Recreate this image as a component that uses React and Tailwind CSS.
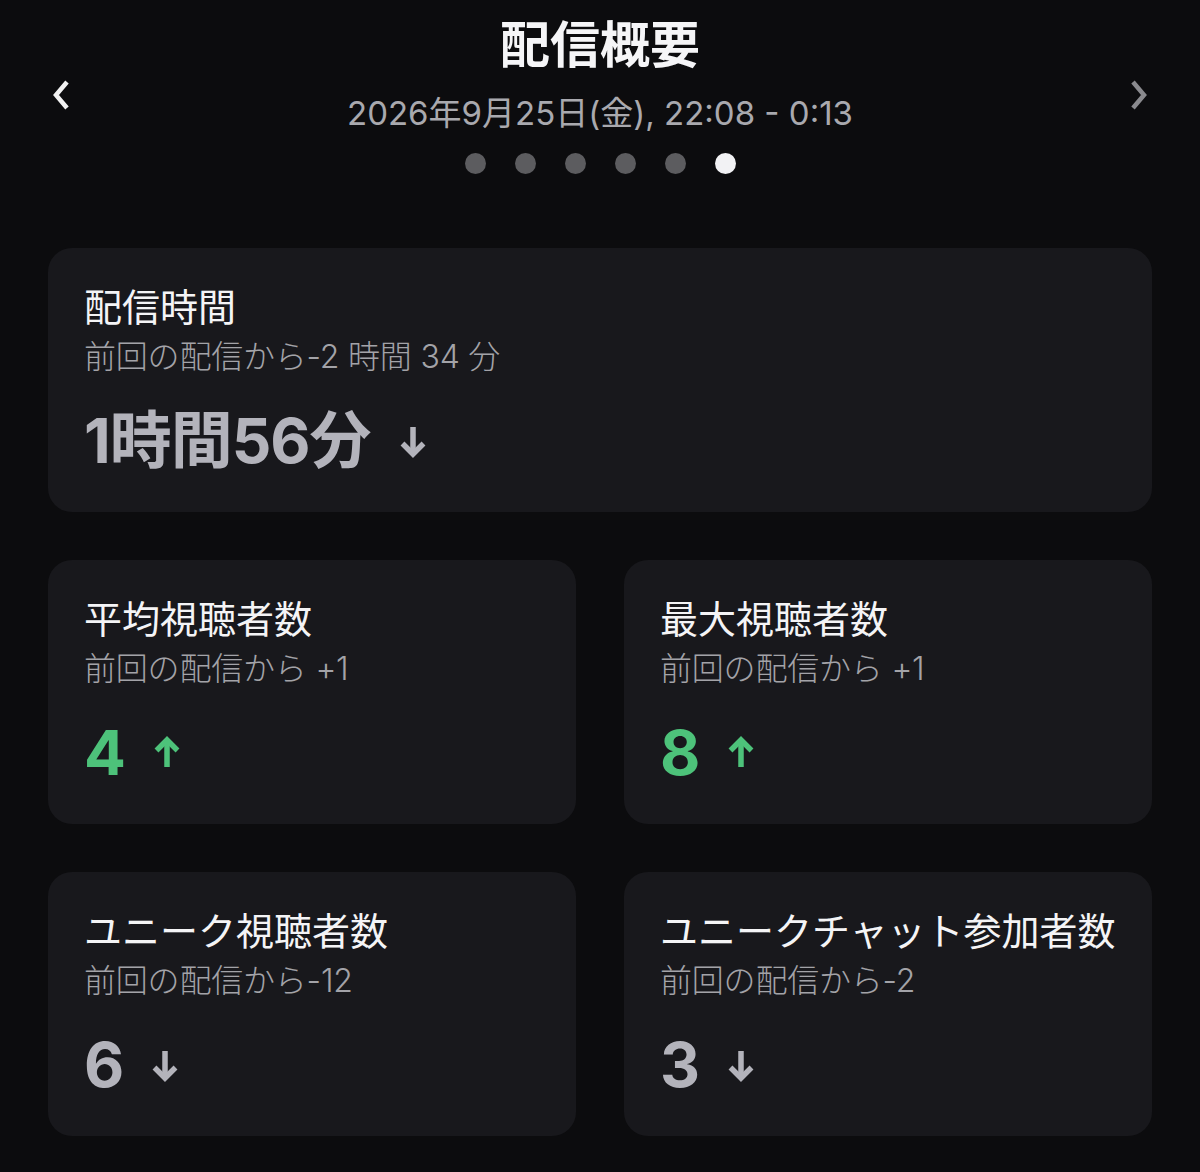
import React from 'react';

const FONT = "font-['Inter','Noto_Sans_CJK_JP',sans-serif]";

const ArrowIcon = ({ up, className }) => (
  <svg width="28" height="34" viewBox="0 0 28 34" fill="none" className={className}>
    {up ? (
      <>
        <path d="M14 31V4" stroke="currentColor" strokeWidth="5.5" />
        <path d="M3.5 14.5L14 4L24.5 14.5" stroke="currentColor" strokeWidth="5.5" strokeLinejoin="miter" />
      </>
    ) : (
      <>
        <path d="M14 3V30" stroke="currentColor" strokeWidth="5.5" />
        <path d="M3.5 19.5L14 30L24.5 19.5" stroke="currentColor" strokeWidth="5.5" strokeLinejoin="miter" />
      </>
    )}
  </svg>
);

const Chevron = ({ right, className }) => (
  <svg width="24" height="32" viewBox="0 0 24 32" fill="none" className={className}>
    {right ? (
      <path d="M7 3L18 16L7 29" stroke="currentColor" strokeWidth="4.5" />
    ) : (
      <path d="M17 3L6 16L17 29" stroke="currentColor" strokeWidth="4.5" />
    )}
  </svg>
);

const StatCard = ({ title, diff, value, up, className = '' }) => (
  <div className={`bg-[#18181c] rounded-[24px] px-[36px] pt-[37px] pb-[35px] ${className}`}>
    <h2 className="text-[38px] leading-[44px] font-normal text-[#f4f4f6]">{title}</h2>
    <p className="mt-2 text-[32px] leading-[40px] font-light text-[#a3a3a8] tracking-[-0.2px]">{diff}</p>
    <div className={`mt-7 flex items-center gap-[28px] h-[72px] ${up ? 'text-[#4dc27a]' : 'text-[#b3b3bb]'}`}>
      <span className="text-[62px] leading-[72px] font-bold tracking-[-1px]">{value}</span>
      <ArrowIcon up={up} />
    </div>
  </div>
);

export default function App() {
  return (
    <div className={`min-h-[1172px] bg-[#0c0c0e] px-12 pt-[15px] pb-[35px] ${FONT}`}>
      {/* Header */}
      <div className="grid grid-cols-[40px_1fr_40px] items-center">
        <Chevron className="text-[#f2f2f2] ml-[2px]" />
        <div className="flex flex-col items-center">
          <h1 className="text-[50px] leading-[60px] font-bold text-[#f5f5f7]">配信概要</h1>
          <p className="mt-[18px] text-[33px] leading-[40px] text-[#a9a9ae]">2026年9月25日(金), 22:08 - 0:13</p>
          <div className="mt-[20px] flex items-center gap-[29px]">
            {[0, 1, 2, 3, 4].map((i) => (
              <span key={i} className="w-[21px] h-[21px] rounded-full bg-[#5c5c5f]" />
            ))}
            <span className="w-[21px] h-[21px] rounded-full bg-[#f2f2f4]" />
          </div>
        </div>
        <Chevron right className="text-[#8a8a8e] justify-self-end mr-[2px]" />
      </div>

      {/* Stats */}
      <div className="mt-[74px] grid grid-cols-2 gap-12">
        <StatCard
          className="col-span-2"
          title="配信時間"
          diff="前回の配信から-2 時間 34 分"
          value="1時間56分"
          up={false}
        />
        <StatCard title="平均視聴者数" diff="前回の配信から +1" value="4" up />
        <StatCard title="最大視聴者数" diff="前回の配信から +1" value="8" up />
        <StatCard title="ユニーク視聴者数" diff="前回の配信から-12" value="6" up={false} />
        <StatCard title="ユニークチャット参加者数" diff="前回の配信から-2" value="3" up={false} />
      </div>
    </div>
  );
}
